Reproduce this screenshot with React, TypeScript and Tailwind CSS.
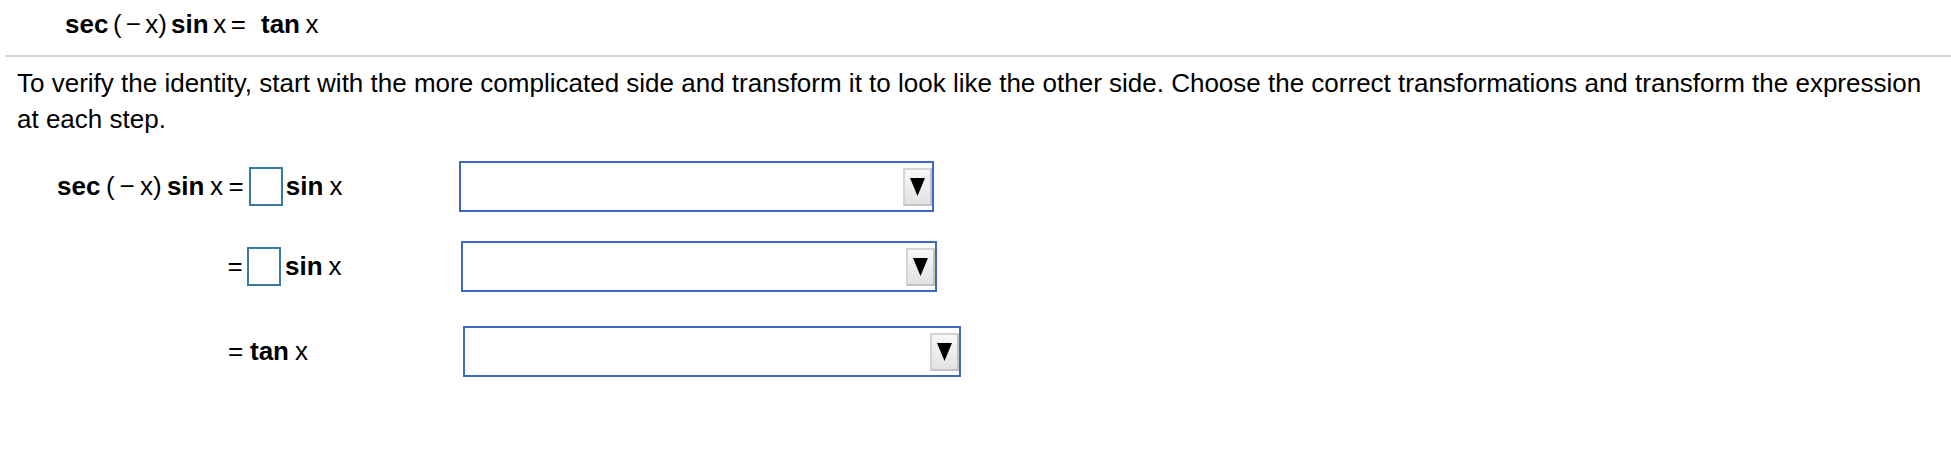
import React from "react";

function SmallBox({ ml }: { ml: string }) {
  return <span className={`${ml} inline-block w-[34px] h-[39px] border-2 border-[#3a7aa0] bg-white shrink-0`} />;
}

function Dropdown({ w }: { w: string }) {
  return (
    <div className={`${w} h-[51px] shrink-0 border-2 border-[#3d68c6] bg-white flex items-center justify-end`}>
      <div className="w-[29px] h-[38px] border-2 border-t-[#d4d4d4] border-l-[#d4d4d4] border-r-[#c2c2c2] border-b-[#c2c2c2] bg-gradient-to-b from-[#f8f8f8] to-[#e2e2e2] flex items-center justify-center">
        <svg width="15" height="18" viewBox="0 0 15 18">
          <polygon points="0,0 15,0 7.5,18" fill="#000" />
        </svg>
      </div>
    </div>
  );
}

function RowSec() {
  return (
    <>
      <span className="font-bold">sec</span>
      <span className="ml-[5.6px]">(</span>
      <span className="ml-[4.8px]">−</span>
      <span className="ml-[5.3px]">x</span>
      <span>)</span>
      <span className="ml-[5.3px] font-bold">sin</span>
      <span className="ml-[5.4px]">x</span>
    </>
  );
}

function HeaderSec() {
  return (
    <>
      <span className="font-bold">sec</span>
      <span className="ml-[4.6px]">(</span>
      <span className="ml-[4px]">−</span>
      <span className="ml-[4.3px]">x</span>
      <span>)</span>
      <span className="ml-[4.3px] font-bold">sin</span>
      <span className="ml-[4.6px]">x</span>
    </>
  );
}

export default function App() {
  return (
    <div className="w-[1951px] h-[467px] bg-white text-black font-['Liberation_Sans',Arial,sans-serif] overflow-hidden">
      <div className="h-[55px] pl-[65px] pt-[7px] text-[26px] leading-[34px] flex items-start whitespace-pre">
        <HeaderSec />
        <span className="ml-[4.5px]">=</span>
        <span className="ml-[15px] font-bold">tan</span>
        <span className="ml-[5.5px]">x</span>
      </div>
      <div className="ml-[5px] h-[2px] bg-[#d3d5df]" />
      <div className="pl-[17px] pr-[16px] pt-[8px] text-[26px] leading-[36px]">
        To verify the identity, start with the more complicated side and transform it to look like the other side. Choose the correct transformations and transform the expression at each step.
      </div>
      <div className="mt-[24px] flex items-center h-[51px] text-[26px]">
        <div className="w-[459px] shrink-0 flex items-center pl-[57px] whitespace-pre">
          <RowSec />
          <span className="ml-[5.5px]">=</span>
          <SmallBox ml="ml-[5.3px]" />
          <span className="ml-[3px] font-bold">sin</span>
          <span className="ml-[6px]">x</span>
        </div>
        <Dropdown w="w-[475px]" />
      </div>
      <div className="mt-[29px] flex items-center h-[51px] text-[26px]">
        <div className="w-[461px] shrink-0 flex items-center pl-[227.5px] whitespace-pre">
          <span>=</span>
          <SmallBox ml="ml-[4.3px]" />
          <span className="ml-[4px] font-bold">sin</span>
          <span className="ml-[6px]">x</span>
        </div>
        <Dropdown w="w-[476px]" />
      </div>
      <div className="mt-[34px] flex items-center h-[51px] text-[26px]">
        <div className="w-[463px] shrink-0 flex items-center pl-[228px] whitespace-pre">
          <span>=</span>
          <span className="ml-[6.8px] font-bold">tan</span>
          <span className="ml-[6px]">x</span>
        </div>
        <Dropdown w="w-[498px]" />
      </div>
    </div>
  );
}
